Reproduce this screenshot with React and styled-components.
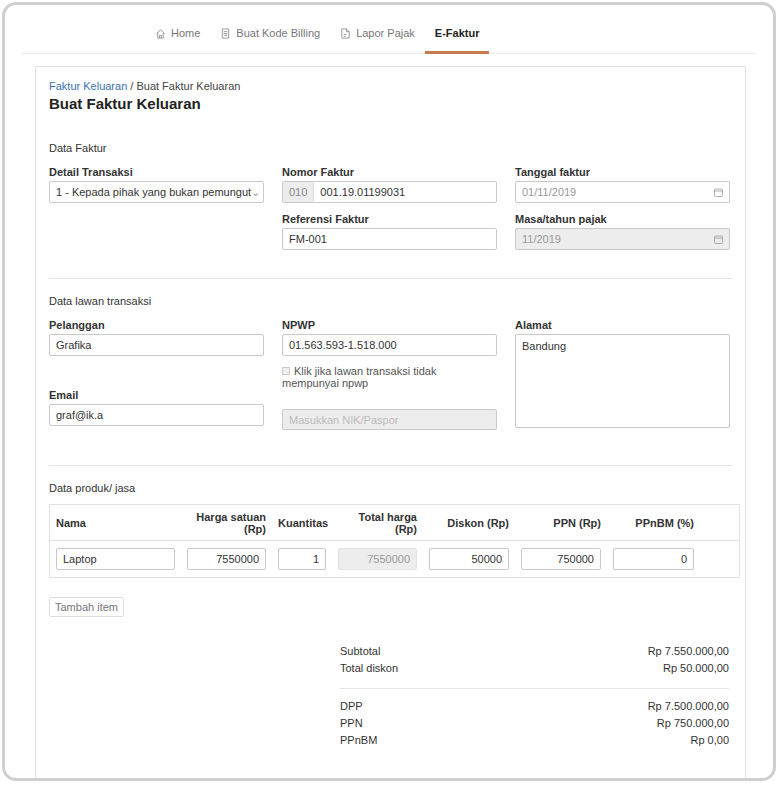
import React from "react";
import styled, { createGlobalStyle } from "styled-components";

const Global = createGlobalStyle`
  html, body { margin: 0; background: #fff; }
  body { font-family: "Liberation Sans", Arial, sans-serif; color: #333; font-size: 11px; }
`;

const Frame = styled.div`
  margin: 2px;
  width: 774px;
  height: 779px;
  border: 3px solid #cfcfcf;
  border-radius: 14px;
  overflow: hidden;
  box-sizing: border-box;
  padding: 0 27px 0 30px;
`;

const Nav = styled.nav`
  display: flex;
  justify-content: flex-start;
  border-bottom: 1px solid #ececec;
  margin: 0 -10px 12px -14px;
  padding-left: 124px;
  height: 48px;
  align-items: flex-end;
`;

const Tab = styled.div`
  display: flex;
  align-items: center;
  gap: 5px;
  padding: 0 10px 12px;
  color: ${(p) => (p.$active ? "#222" : "#777")};
  font-weight: ${(p) => (p.$active ? "bold" : "normal")};
  border-bottom: 3px solid ${(p) => (p.$active ? "#c77b4d" : "transparent")};
  margin-bottom: -1px;
  font-size: 11px;
`;

const Card = styled.section`
  border: 1px solid #e2e2e2;
  border-bottom: none;
  padding: 13px 13px 30px 13px;
`;

const Crumb = styled.div`
  font-size: 11px;
  color: #444;
  a { color: #3a6fb0; text-decoration: none; }
`;

const Title = styled.h1`
  margin: 3px 0 30px;
  font-size: 15px;
  font-weight: bold;
  color: #222;
`;

const SectionTitle = styled.div`
  font-size: 11px;
  color: #333;
  margin-bottom: ${(p) => p.$mb || "12px"};
`;

const Grid = styled.div`
  display: grid;
  grid-template-columns: 215px 215px 215px;
  column-gap: 18px;
  row-gap: ${(p) => p.$rowGap || "10px"};
`;

const Field = styled.div`
  display: flex;
  flex-direction: column;
  gap: 3px;
  grid-column: ${(p) => p.$col || "auto"};
  grid-row: ${(p) => p.$row || "auto"};
  margin-top: ${(p) => p.$mt || "0"};
`;

const Label = styled.label`
  font-size: 11px;
  font-weight: bold;
  color: #333;
`;

const Input = styled.div`
  height: ${(p) => p.$h || "22px"};
  box-sizing: border-box;
  border: 1px solid ${(p) => p.$border || "#c9c9c9"};
  border-radius: 2px;
  background: ${(p) => (p.$disabled ? "#ededed" : "#fff")};
  color: ${(p) => p.$color || (p.$muted ? "#999" : "#333")};
  display: flex;
  align-items: center;
  justify-content: ${(p) => (p.$right ? "flex-end" : p.$start ? "flex-start" : "space-between")};
  padding: 0 6px;
  margin-top: ${(p) => p.$mt || "0"};
  font-size: 11px;
  overflow: hidden;
  white-space: nowrap;
`;

const Prefix = styled.span`
  background: #ececec;
  color: #888;
  height: 100%;
  display: flex;
  align-items: center;
  padding: 0 6px;
  margin: 0 6px 0 -6px;
  border-right: 1px solid #ddd;
`;

const Caret = styled.span`
  color: #999;
`;

const TextArea = styled.div`
  height: 94px;
  box-sizing: border-box;
  border: 1px solid #c9c9c9;
  border-radius: 2px;
  padding: 5px 6px;
  font-size: 11px;
`;

const Divider = styled.hr`
  border: none;
  border-top: 1px solid #e5e5e5;
  margin: ${(p) => p.$m || "28px 0 16px"};
`;

const Check = styled.div`
  font-size: 11px;
  color: #555;
  line-height: 12px;
  margin-top: 6px;
  span {
    display: inline-block;
    width: 6px;
    height: 6px;
    border: 1px solid #ccc;
    background: #eee;
    margin-right: 4px;
  }
`;

const Table = styled.div`
  border: 1px solid #e3e3e3;
  width: 689px;
`;

const Row = styled.div`
  display: grid;
  grid-template-columns: 119px 79px 48px 79px 80px 80px 81px;
  column-gap: 12px;
  padding: 0 6px;
  align-items: center;
  border-bottom: ${(p) => (p.$head ? "1px solid #e3e3e3" : "none")};
  height: 36px;
  box-sizing: border-box;
`;

const Th = styled.div`
  font-weight: bold;
  font-size: 11px;
  line-height: 12px;
  color: #333;
  text-align: ${(p) => (p.$left ? "left" : "right")};
`;

const Button = styled.button`
  display: block;
  margin-top: 19px;
  border: 1px solid #ddd;
  background: #fff;
  color: #777;
  font-family: inherit;
  font-size: 11px;
  padding: 3px 5px;
  border-radius: 2px;
`;

const Totals = styled.div`
  margin: 26px 0 0 291px;
  width: 389px;
`;

const TotalRow = styled.div`
  display: flex;
  justify-content: space-between;
  font-size: 11px;
  color: #333;
  line-height: 17px;
`;

const Cal = () => (
  <svg width="9" height="9" viewBox="0 0 9 9" fill="none" stroke="#999" strokeWidth="0.8">
    <rect x="0.5" y="1" width="8" height="7.5" rx="1" />
    <line x1="0.5" y1="3" x2="8.5" y2="3" />
  </svg>
);

const Icon = ({ d }) => (
  <svg width="11" height="11" viewBox="0 0 12 12" fill="none" stroke="#888" strokeWidth="0.9">
    <path d={d} />
  </svg>
);

export default function App() {
  return (
    <Frame>
      <Global />
      <Nav>
        <Tab><Icon d="M1.5 6L6 2l4.5 4M3 5v6h6V5M5 11V8h2v3" />Home</Tab>
        <Tab><Icon d="M2.5 1h7v10h-7zM4 4h4M4 6h4M4 8h4" />Buat Kode Billing</Tab>
        <Tab><Icon d="M2 1h5l3 3v7H2zM7 1v3h3M4 7h3M4 9h2" />Lapor Pajak</Tab>
        <Tab $active>E-Faktur</Tab>
      </Nav>
      <Card>
        <Crumb><a href="#">Faktur Keluaran</a> / Buat Faktur Keluaran</Crumb>
        <Title>Buat Faktur Keluaran</Title>
        <SectionTitle>Data Faktur</SectionTitle>
        <Grid>
          <Field>
            <Label>Detail Transaksi</Label>
            <Input>1 - Kepada pihak yang bukan pemungut <Caret>⌄</Caret></Input>
          </Field>
          <Field>
            <Label>Nomor Faktur</Label>
            <Input $start><Prefix>010</Prefix>001.19.01199031</Input>
          </Field>
          <Field>
            <Label>Tanggal faktur</Label>
            <Input $muted>01/11/2019<Cal /></Input>
          </Field>
          <Field $col="2">
            <Label>Referensi Faktur</Label>
            <Input>FM-001</Input>
          </Field>
          <Field $col="3">
            <Label>Masa/tahun pajak</Label>
            <Input $disabled $muted>11/2019<Cal /></Input>
          </Field>
        </Grid>
        <Divider />
        <SectionTitle>Data lawan transaksi</SectionTitle>
        <Grid $rowGap="0">
          <Field $col="1" $row="1">
            <Label>Pelanggan</Label>
            <Input>Grafika</Input>
          </Field>
          <Field $col="1" $row="2" $mt="28px">
            <Label>Email</Label>
            <Input>graf@ik.a</Input>
          </Field>
          <Field $col="2" $row="1 / span 2">
            <Label>NPWP</Label>
            <Input>01.563.593-1.518.000</Input>
            <Check><span />Klik jika lawan transaksi tidak<br />mempunyai npwp</Check>
            <Input $disabled $h="21px" $mt="17px" $color="#bbb">Masukkan NIK/Paspor</Input>
          </Field>
          <Field $col="3" $row="1 / span 2">
            <Label>Alamat</Label>
            <TextArea>Bandung</TextArea>
          </Field>
        </Grid>
        <Divider $m="35px 0 16px" />
        <SectionTitle $mb="10px">Data produk/ jasa</SectionTitle>
        <Table>
          <Row $head>
            <Th $left>Nama</Th>
            <Th>Harga satuan<br />(Rp)</Th>
            <Th $left>Kuantitas</Th>
            <Th>Total harga<br />(Rp)</Th>
            <Th>Diskon (Rp)</Th>
            <Th>PPN (Rp)</Th>
            <Th>PPnBM (%)</Th>
          </Row>
          <Row>
            <Input>Laptop</Input>
            <Input $right>7550000</Input>
            <Input $right>1</Input>
            <Input $right $disabled $muted $border="#e3e3e3">7550000</Input>
            <Input $right>50000</Input>
            <Input $right>750000</Input>
            <Input $right>0</Input>
          </Row>
        </Table>
        <Button>Tambah item</Button>
        <Totals>
          <TotalRow><span>Subtotal</span><span>Rp 7.550.000,00</span></TotalRow>
          <TotalRow><span>Total diskon</span><span>Rp 50.000,00</span></TotalRow>
          <Divider $m="11px 0 9px" />
          <TotalRow><span>DPP</span><span>Rp 7.500.000,00</span></TotalRow>
          <TotalRow><span>PPN</span><span>Rp 750.000,00</span></TotalRow>
          <TotalRow><span>PPnBM</span><span>Rp 0,00</span></TotalRow>
        </Totals>
      </Card>
    </Frame>
  );
}
